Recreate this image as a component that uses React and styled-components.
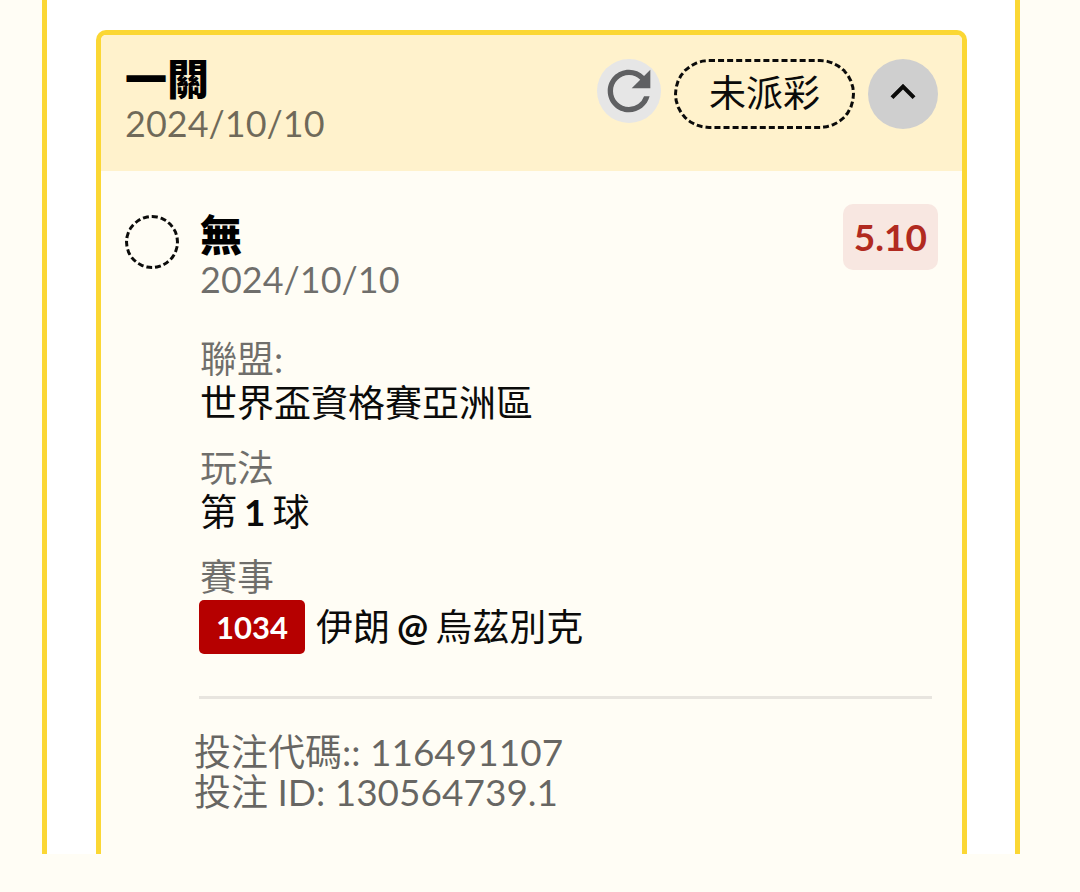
import React from 'react'
import { useState } from 'react';
import styled, { createGlobalStyle } from 'styled-components';
import { MdRefresh, MdExpandLess } from 'react-icons/md';

const GlobalStyle = createGlobalStyle`
  * {
    box-sizing: border-box;
  }

  body {
    margin: 0;
    background: #fffdf5;
    color: #0b0b0a;
    font-family: Lato, "Noto Sans CJK TC", sans-serif;
    font-size: 37px;
    line-height: 44px;
  }

  h2, h3, p, dl, dd {
    margin: 0;
  }
`;

const Panel = styled.main`
  margin: 0 60px 38px 42px;
  padding: 30px 48px 0 49px;
  border: solid #fbd734;
  border-width: 0 5px;
  background: #ffffff;
`;

const Card = styled.article`
  border: 5px solid #fbd734;
  border-bottom: none;
  border-radius: 10px 10px 0 0;
  background: #fffdf5;
  overflow: hidden;
`;

const CardHeader = styled.header`
  display: flex;
  justify-content: space-between;
  align-items: flex-start;
  padding: 22px 24px 26px;
  background: #fff2cc;
`;

const Title = styled.h2`
  font-size: 42px;
  line-height: 44px;
  font-weight: 900;
  color: #000000;
`;

const EventTitle = styled(Title).attrs({ as: 'h3' })``;

const DateText = styled.p`
  color: rgba(0, 0, 0, 0.56);
  font-size: 36px;
`;

const Actions = styled.div`
  display: flex;
  align-items: flex-start;
  gap: 13px;
  padding-top: 2px;
`;

const RoundButton = styled.button`
  display: flex;
  align-items: center;
  justify-content: center;
  width: ${(props) => props.$size}px;
  height: ${(props) => props.$size}px;
  padding: 0;
  border: none;
  border-radius: 50%;
  background: ${(props) => props.$background};
  color: ${(props) => props.$color};
  cursor: pointer;

  svg {
    flex-shrink: 0;
  }
`;

const ToggleButton = styled(RoundButton)`
  padding-bottom: 4px;

  svg {
    transform: ${(props) => props.$open ? 'none' : 'rotate(180deg)'};
  }
`;

const Status = styled.span`
  padding: 9px 32px 11px;
  border: 3px dashed #0b0b0a;
  border-radius: 35px;
`;

const CardBody = styled.section`
  display: flex;
  align-items: flex-start;
  gap: 20px;
  padding: 33px 24px 42px;
`;

const ResultCircle = styled.span`
  flex-shrink: 0;
  width: 54px;
  height: 54px;
  margin-top: 11px;
  border: 3px dashed #0b0b0a;
  border-radius: 50%;
`;

const EventContent = styled.div`
  flex: 1;
`;

const EventTop = styled.div`
  display: flex;
  justify-content: space-between;
  align-items: flex-start;
  padding-left: 1px;
`;

const EventName = styled.div`
  padding-top: 9px;
`;

const Odds = styled.strong`
  padding: 11px;
  border-radius: 10px;
  background: #f8e7e1;
  color: #b12a20;
  font-weight: 700;
`;

const Details = styled.dl`
  display: flex;
  flex-direction: column;
  gap: 21px;
  padding: 36px 0 42px 1px;
`;

const Label = styled.dt`
  color: rgba(0, 0, 0, 0.56);
`;

const Value = styled.dd`
  display: flex;
  gap: 7px;
`;

const MatchValue = styled(Value)`
  align-items: center;
  margin-left: -1px;
  padding-top: 1px;
`;

const MatchCode = styled.span`
  margin-right: 4px;
  padding: 5px 17px;
  border-radius: 5px;
  background: #b60000;
  color: #ffffff;
  font-size: 31px;
  font-weight: 700;
`;

const BetInfo = styled.footer`
  margin-right: 6px;
  padding-top: 33px;
  border-top: 3px solid #e8e5df;
  color: rgba(0, 0, 0, 0.6);
  line-height: 40px;

  p {
    margin-left: -5px;
  }
`;

const Detail = ({ label, children }) => (
  <div>
    <Label>{label}</Label>
    {children}
  </div>
);

const BetCard = ({ bet }) => {
  const [open, setOpen] = useState(true);

  return (
    <Card>
      <CardHeader>
        <div>
          <Title>{bet.title}</Title>
          <DateText>{bet.date}</DateText>
        </div>
        <Actions>
          <RoundButton type="button" aria-label="重新整理" $size={64} $background="#e6e6e6" $color="#5f6062">
            <MdRefresh size={64} />
          </RoundButton>
          <Status>{bet.status}</Status>
          <ToggleButton
            type="button"
            aria-label="展開或收合"
            aria-expanded={open}
            onClick={() => setOpen(!open)}
            $open={open}
            $size={70}
            $background="#cfcfcf"
            $color="#0b0b0a"
          >
            <MdExpandLess size={50} />
          </ToggleButton>
        </Actions>
      </CardHeader>
      {open && (
        <CardBody>
          <ResultCircle />
          <EventContent>
            <EventTop>
              <EventName>
                <EventTitle>{bet.pick}</EventTitle>
                <DateText>{bet.date}</DateText>
              </EventName>
              <Odds>{bet.odds}</Odds>
            </EventTop>
            <Details>
              <Detail label="聯盟:">
                <Value>{bet.league}</Value>
              </Detail>
              <Detail label="玩法">
                <Value>
                  <span>第</span>
                  <b>{bet.goal}</b>
                  <span>球</span>
                </Value>
              </Detail>
              <Detail label="賽事">
                <MatchValue>
                  <MatchCode>{bet.matchCode}</MatchCode>
                  <span>{bet.home}</span>
                  <b>@</b>
                  <span>{bet.away}</span>
                </MatchValue>
              </Detail>
            </Details>
            <BetInfo>
              <p>投注代碼:: {bet.code}</p>
              <p>投注 ID: {bet.id}</p>
            </BetInfo>
          </EventContent>
        </CardBody>
      )}
    </Card>
  );
}

const bet = {
  title: '一關',
  date: '2024/10/10',
  status: '未派彩',
  pick: '無',
  odds: '5.10',
  league: '世界盃資格賽亞洲區',
  goal: 1,
  matchCode: '1034',
  home: '伊朗',
  away: '烏茲別克',
  code: '116491107',
  id: '130564739.1',
};

const App = () => {
  return (
    <>
      <GlobalStyle />
      <Panel>
        <BetCard bet={bet} />
      </Panel>
    </>
  );
}

export default App
